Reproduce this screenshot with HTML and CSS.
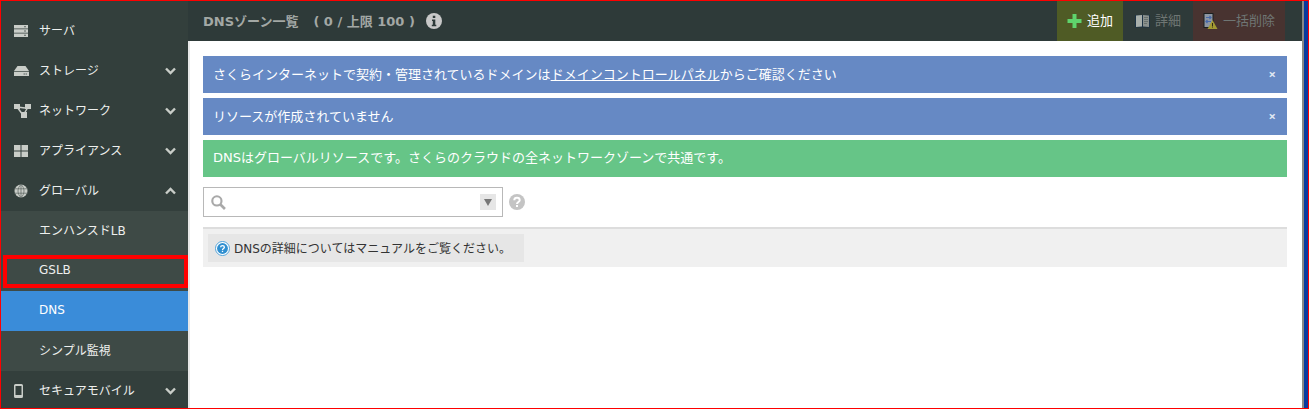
FILE: index.html
```html
<!DOCTYPE html>
<html lang="ja">
<head>
<meta charset="utf-8">
<title>DNS</title>
<link rel="stylesheet" href="styles.css">
</head>
<body>
<div class="frame">
  <nav class="sidebar">
    <a class="item"><svg class="ico" viewBox="0 0 14 12"><path fill="#c9cdc8" d="M0 0h14v3.400H0zM0 4.300h14v3.400H0zM0 8.600h14V12H0z"/><path fill="#59635f" d="M10 1.200h2v1h-2zM10 5.500h2v1h-2zM10 9.800h2v1h-2z"/></svg><span class="label">サーバ</span></a>
    <a class="item"><svg class="ico ico-15" viewBox="0 0 15 10"><path fill="#c9cdc8" d="M3.500 0h8L15 5v5H0V5z"/><path fill="#333f3c" d="M0 5.300h15v.7H0z"/><path fill="#59635f" d="M9.500 7.500h1.500v1H9.500zM11.500 7.500h1.500v1h-1.500z"/></svg><span class="label">ストレージ</span><svg class="chev" viewBox="0 0 11 8"><path d="M1 1.500l4.500 4.500 4.500-4.500" fill="none" stroke="#c9cdc8" stroke-width="2.400"/></svg></a>
    <a class="item"><svg class="ico ico-wide" viewBox="0 0 17 14"><path d="M3 3l8 1M3 3l6 8M14 3l-4 7" stroke="#c9cdc8" stroke-width="1.500" fill="none"/><path fill="#c9cdc8" d="M0 0h6v5H0zM11 0h6v5h-6zM7 8h6v6H7z"/></svg><span class="label">ネットワーク</span><svg class="chev" viewBox="0 0 11 8"><path d="M1 1.500l4.500 4.500 4.500-4.500" fill="none" stroke="#c9cdc8" stroke-width="2.400"/></svg></a>
    <a class="item"><svg class="ico" viewBox="0 0 14 12"><path fill="#c9cdc8" d="M0 0h6.500v5.500H0zM7.500 0H14v5.500H7.500zM0 6.500h6.500V12H0zM7.500 6.500H14V12H7.500z"/></svg><span class="label">アプライアンス</span><svg class="chev" viewBox="0 0 11 8"><path d="M1 1.500l4.500 4.500 4.500-4.500" fill="none" stroke="#c9cdc8" stroke-width="2.400"/></svg></a>
    <a class="item"><svg class="ico" viewBox="0 0 14 14"><circle cx="7" cy="7" r="6.500" fill="#c9cdc8"/><path d="M0 4.800h14M0 9.200h14M7 0v14M7 .5C3 4 3 10 7 13.500M7 .5c4 3.500 4 9.500 0 13" stroke="#59635f" stroke-width=".7" fill="none"/></svg><span class="label">グローバル</span><svg class="chev" viewBox="0 0 11 8"><path d="M1 6.500l4.500-4.500 4.500 4.500" fill="none" stroke="#c9cdc8" stroke-width="2.400"/></svg></a>
    <a class="item sub sub-kana">エンハンスドLB</a>
    <a class="item sub">GSLB</a>
    <a class="item sub active">DNS</a>
    <a class="item sub sub-kana">シンプル監視</a>
    <a class="item"><svg class="ico ico-phone" viewBox="0 0 9 14"><path fill="#c9cdc8" d="M1.500 0h6A1.500 1.500 0 0 1 9 1.500v11A1.500 1.500 0 0 1 7.500 14h-6A1.500 1.500 0 0 1 0 12.500v-11A1.500 1.500 0 0 1 1.500 0z"/><path fill="#333f3c" d="M1.500 2h6v9h-6z"/></svg><span class="label">セキュアモバイル</span><svg class="chev" viewBox="0 0 11 8"><path d="M1 1.500l4.500 4.500 4.500-4.500" fill="none" stroke="#c9cdc8" stroke-width="2.400"/></svg></a>
  </nav>
  <div class="highlight"></div>
  <main class="main">
    <header class="topbar">
      <div class="title"><span>DNSゾーン一覧</span><span class="count">( 0 / 上限 100 )</span>
        <svg class="info" viewBox="0 0 16 16"><circle cx="8" cy="8" r="8" fill="#c8c8c8"/><path fill="#2e3a39" d="M6.800 2.800h2.500v2.300H6.800zM6 6.500h3.300v5.200h1v1.500H5.800v-1.500h1V8H6z"/></svg>
      </div>
      <div class="actions">
        <button class="btn btn-add"><svg class="btn-ico" viewBox="0 0 14 14"><path fill="#5fd36c" d="M5 0h4v5h5v4H9v5H5V9H0V5h5z"/></svg><span class="btn-text">追加</span></button>
        <button class="btn btn-detail"><svg class="btn-ico" viewBox="0 0 15 14"><path fill="#1d3345" d="M0 1h15v12.500H0z"/><path fill="#a9b0ac" d="M1 1.500 7 1v11.500l-6 .5z"/><path fill="#8a918e" d="M8 1l6 .5V13l-6-.5z"/><path stroke="#5f6866" stroke-width=".8" d="M9 3.500h4M9 5.500h4M9 7.500h4M9 9.500h3"/></svg><span class="btn-text">詳細</span></button>
        <button class="btn btn-bulk"><svg class="btn-ico bulk-ico" viewBox="0 0 14 16"><path fill="#1c2020" d="M0 0h10v15H0z"/><path fill="#8d96a2" d="M1 1h8v13H1z"/><path stroke="#4668a8" stroke-width="1.200" fill="none" d="M2.500 4.500h5M6 3l1.500 1.500L6 6M7.500 8.500h-5M4 7 2.500 8.500 4 10"/><path fill="#a39a32" d="M9 7l5 9H4z"/><path fill="#2e2a18" d="M8.500 10h1v3h-1zM8.500 13.600h1v1h-1z"/></svg><span class="btn-text">一括削除</span></button>
      </div>
    </header>
    <section class="content">
      <div class="alert alert-info"><span class="alert-text">さくらインターネットで契約・管理されているドメインは<u>ドメインコントロールパネル</u>からご確認ください</span><span class="close">×</span></div>
      <div class="alert alert-info"><span class="alert-text">リソースが作成されていません</span><span class="close">×</span></div>
      <div class="alert alert-ok"><span class="alert-text">DNSはグローバルリソースです。さくらのクラウドの全ネットワークゾーンで共通です。</span></div>
      <div class="search-row">
        <div class="search">
          <svg class="search-ico" viewBox="0 0 14 14"><circle cx="5.500" cy="5.500" r="4.300" fill="none" stroke="#a9a9a9" stroke-width="2"/><path d="M8.800 8.800L13 13" stroke="#a9a9a9" stroke-width="2.500"/></svg>
          <span class="drop"><i class="tri"></i></span>
        </div>
        <svg class="help" viewBox="0 0 16 16"><circle cx="8" cy="8" r="8" fill="#c4c4c4"/><path d="M5.300 6.200C5.300 3 10.700 3 10.700 6.200 10.700 8 8 8 8 10" fill="none" stroke="#fff" stroke-width="2"/><path fill="#fff" d="M7 11h2v2H7z"/></svg>
      </div>
      <div class="manual">
        <div class="manual-box"><svg class="manual-ico" viewBox="0 0 16 16"><circle cx="8" cy="8" r="7.500" fill="#fff" stroke="#4a9fd8"/><circle cx="8" cy="8" r="5.800" fill="#2f8fd0"/><path d="M6 6.600C6 4.300 10 4.300 10 6.600 10 8 8 8 8 9.500" fill="none" stroke="#fff" stroke-width="1.400"/><path fill="#fff" d="M7.300 10.400h1.400v1.400H7.300z"/></svg><span class="manual-text">DNSの詳細についてはマニュアルをご覧ください。</span></div>
      </div>
    </section>
  </main>
  <div class="edge"></div>
</div>
</body>
</html>
```
FILE: styles.css
```css
* { box-sizing: border-box; }
html, body { margin: 0; height: 100%; overflow: hidden; }
body {
  font-family: "DejaVu Sans", "Noto Sans CJK JP", sans-serif;
  font-size: 13px;
  background: #fff;
}
.frame {
  position: relative;
  display: flex;
  width: 1309px;
  height: 409px;
  border: 1px solid #f00;
  overflow: hidden;
}
.sidebar {
  flex: 0 0 187px;
  padding-top: 10px;
  background: #333f3c;
  display: flex;
  flex-direction: column;
  font-size: 12px;
}
.item {
  flex: 0 0 40px;
  display: flex;
  align-items: center;
  padding: 0 12px 0 13px;
  color: #eef0ee;
}
.ico { width: 14px; height: 14px; flex: none; margin-right: 11px; }
.ico-15 { width: 15px; margin-right: 10px; }
.ico-wide { width: 17px; margin-right: 8px; }
.ico-phone { width: 9px; margin-right: 16px; }
.label { flex: 1; padding-bottom: 4px; }
.chev { width: 11px; height: 8px; flex: none; }
.sub { background: #3e4a46; padding-left: 38px; padding-bottom: 2px; }
.sub-kana { padding-bottom: 4px; }
.active { background: #3a8cd9; color: #fff; }
.highlight {
  position: absolute;
  left: 2px;
  top: 254px;
  width: 185px;
  height: 33px;
  border: 4px solid #f00;
}
.main {
  flex: 1;
  min-width: 0;
  display: flex;
  flex-direction: column;
}
.topbar {
  flex: 0 0 40px;
  display: flex;
  justify-content: space-between;
  background: #2e3a39;
  padding: 0 17px 0 15px;
}
.title {
  display: flex;
  align-items: center;
  color: #a3a8a5;
  font-weight: 700;
}
.title span { padding-bottom: 2px; }
.count { margin-left: 15px; }
.info { width: 16px; height: 16px; margin-left: 11px; }
.actions { display: flex; }
.btn {
  display: flex;
  align-items: center;
  justify-content: center;
  border: 0;
  padding: 0;
  font: inherit;
  height: 40px;
}
.btn-text { padding-bottom: 3px; }
.btn-ico { width: 15px; height: 14px; margin-right: 5px; }
.btn-add { width: 66px; background: #4f5b25; color: #fff; }
.btn-detail { width: 70px; background: #2e3a39; color: #6f7674; }
.btn-bulk { width: 92px; background: #483330; color: #6f7674; }
.bulk-ico { height: 16px; }
.content {
  flex: 1;
  border-left: 2px solid #e8e8e8;
  padding: 15px 15px 0 13px;
  display: flex;
  flex-direction: column;
}
.alert {
  height: 37px;
  margin-bottom: 5px;
  padding: 0 10px;
  display: flex;
  align-items: center;
  justify-content: space-between;
  color: #fff;
}
.alert-text { padding-bottom: 2px; }
.alert-info { background: #6689c4; }
.alert-ok { background: #66c587; margin-bottom: 10px; }
.alert-ok .alert-text { padding-bottom: 4px; }
.close {
  color: #dfe6f2;
  font-family: "Open Sans", sans-serif;
  font-size: 13px;
  font-weight: 700;
  margin-right: 1px;
  padding-bottom: 2px;
}
.search-row {
  display: flex;
  align-items: center;
  margin-bottom: 10px;
}
.search {
  width: 300px;
  height: 30px;
  border: 1px solid #b8b8b8;
  display: flex;
  align-items: center;
  justify-content: space-between;
  padding: 0 6px 0 7px;
}
.search-ico { width: 15px; height: 15px; }
.drop {
  width: 16px;
  height: 16px;
  background: #e6e6e6;
  display: flex;
  align-items: center;
  justify-content: center;
}
.tri {
  border-left: 4px solid transparent;
  border-right: 4px solid transparent;
  border-top: 7px solid #777;
}
.help { width: 16px; height: 16px; margin-left: 6px; }
.manual {
  height: 40px;
  border-top: 2px solid #ddd;
  background: #f0f0f0;
  padding: 5px;
}
.manual-box {
  width: 316px;
  height: 28px;
  background: #e6e6e6;
  display: flex;
  align-items: center;
  padding-left: 7px;
  color: #333;
  font-size: 12px;
}
.manual-ico { width: 15px; height: 15px; margin-right: 4px; }
.manual-text { padding-bottom: 2px; }
.edge {
  flex: 0 0 6px;
  border-left: 2px solid #888;
  background: #0a3a9e;
}
```
